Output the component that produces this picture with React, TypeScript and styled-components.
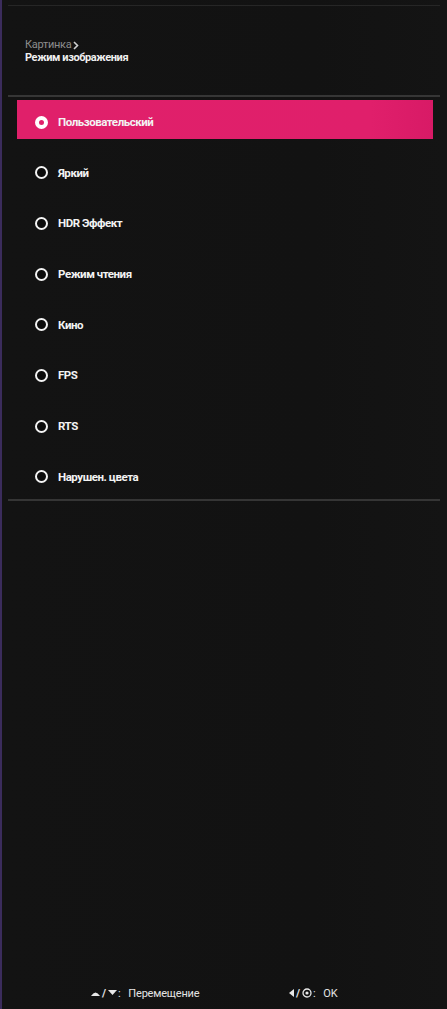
import React from "react";
import styled, { createGlobalStyle } from "styled-components";

const Global = createGlobalStyle`
  html, body { margin: 0; padding: 0; background: #131313; }
  body { width: 447px; height: 1009px; overflow: hidden; }
  #root { height: 1009px; }
`;

const Screen = styled.div`
  box-sizing: border-box;
  height: 1009px;
  width: 447px;
  display: flex;
  flex-direction: column;
  background: linear-gradient(90deg, #131313 0%, #121212 70%, #141414 100%);
  border-left: 2px solid #3b2c5c;
  font-family: Roboto, "Liberation Sans", sans-serif;
  color: #f2f2f2;
`;

const Rule = styled.div<{ $top: number; $bottom: number; $color: string; $h: number }>`
  height: ${(p) => p.$h}px;
  margin: ${(p) => p.$top}px 7px ${(p) => p.$bottom}px 6px;
  background: ${(p) => p.$color};
`;

const Header = styled.div`
  display: flex;
  flex-direction: column;
  padding-left: 23px;
  margin-top: 33px;
  gap: 1px;
`;

const Crumb = styled.div`
  display: flex;
  align-items: center;
  gap: 2px;
  font-size: 11px;
  line-height: 12px;
  color: #8d8d8d;
  letter-spacing: -0.3px;
`;

const Title = styled.div`
  font-size: 11px;
  line-height: 12px;
  font-weight: 700;
  color: #efefef;
  letter-spacing: -0.4px;
`;

const List = styled.div`
  display: flex;
  flex-direction: column;
  gap: 11.7px;
  padding: 3px 0 5px;
`;

const Item = styled.div<{ $selected?: boolean }>`
  height: 39px;
  margin: 0 14px 0 15px;
  display: flex;
  align-items: center;
  gap: 10px;
  padding: 5px 0 0 18px;
  box-sizing: border-box;
  background: ${(p) => (p.$selected ? "linear-gradient(90deg, #e0206a 0%, #e01f6b 85%, #d81a66 100%)" : "transparent")};
`;

const Radio = styled.span<{ $selected?: boolean }>`
  box-sizing: border-box;
  width: 13px;
  height: 13px;
  border-radius: 50%;
  border: ${(p) => (p.$selected ? "4px solid #ffffff" : "2px solid #f4f4f4")};
  background: ${(p) => (p.$selected ? "#e0206a" : "#0c0c0c")};
  flex: none;
`;

const Label = styled.span`
  font-size: 11.5px;
  font-weight: 700;
  letter-spacing: -0.45px;
  color: #f3f3f3;
`;

const Footer = styled.div`
  margin-top: auto;
  height: 32px;
  display: flex;
  align-items: center;
  padding-left: 89px;
  font-size: 11px;
  color: #e4e4e4;
  letter-spacing: -0.2px;
`;

const Hint = styled.div<{ $width?: number }>`
  display: flex;
  align-items: center;
  gap: 1px;
  width: ${(p) => (p.$width ? `${p.$width}px` : "auto")};
`;

const HintText = styled.span`
  margin-left: 7px;
`;

const Slash = styled.span`
  font-weight: 700;
  margin: 0 1px;
`;

const Chevron = () => (
  <svg width="6" height="9" viewBox="0 0 6 9">
    <path d="M1 1 L4.5 4.5 L1 8" fill="none" stroke="#cfcfcf" strokeWidth="1.6" />
  </svg>
);

const items = ["Пользовательский", "Яркий", "HDR Эффект", "Режим чтения", "Кино", "FPS", "RTS", "Нарушен. цвета"];

export default function App() {
  return (
    <>
      <Global />
      <Screen>
        <Rule $top={5} $bottom={0} $color="#262626" $h={1} />
        <Header>
          <Crumb>
            Картинка
            <Chevron />
          </Crumb>
          <Title>Режим изображения</Title>
        </Header>
        <Rule $top={31} $bottom={0} $color="#363636" $h={2} />
        <List>
          {items.map((t, i) => (
            <Item key={t} $selected={i === 0}>
              <Radio $selected={i === 0} />
              <Label>{t}</Label>
            </Item>
          ))}
        </List>
        <Rule $top={0} $bottom={0} $color="#353535" $h={2} />
        <Footer>
          <Hint $width={198}>
            <svg width="9" height="6" viewBox="0 0 9 6">
              <path d="M0 6 Q4.5 -1 9 6 Z" fill="#e8e8e8" />
            </svg>
            <Slash>/</Slash>
            <svg width="9" height="6" viewBox="0 0 9 6">
              <path d="M0 0 L9 0 L4.5 5 Z" fill="#e8e8e8" />
            </svg>
            <span>:</span>
            <HintText>Перемещение</HintText>
          </Hint>
          <Hint>
            <svg width="5" height="8" viewBox="0 0 5 8">
              <path d="M5 0 L5 8 L0 4 Z" fill="#e8e8e8" />
            </svg>
            <Slash>/</Slash>
            <svg width="10" height="10" viewBox="0 0 10 10">
              <circle cx="5" cy="5" r="4" fill="none" stroke="#e8e8e8" strokeWidth="1.3" />
              <circle cx="5" cy="5" r="1.6" fill="#e8e8e8" />
            </svg>
            <span>:</span>
            <HintText>OK</HintText>
          </Hint>
        </Footer>
      </Screen>
    </>
  );
}
